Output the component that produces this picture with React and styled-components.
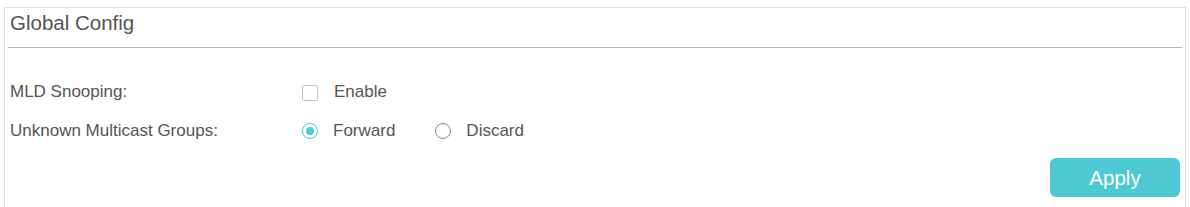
import React, { useState } from "react";
import styled, { createGlobalStyle } from "styled-components";

const Global = createGlobalStyle`
  html, body { margin: 0; padding: 0; background: #ffffff; overflow: hidden; }
  body { font-family: "Liberation Sans", Arial, sans-serif; }
  * { box-sizing: border-box; }
`;

const Panel = styled.section`
  margin: 7px 4px 0 4px;
  width: 1182px;
  height: 201px;
  border: 1px solid #e2e2e2;
  padding: 0 5px;
  background: #fff;
`;

const Header = styled.div`
  margin: 0 -2px 0 -2px;
  padding: 3px 2px 12px 2px;
  border-bottom: 1px solid #b4b4b4;
`;

const Title = styled.h2`
  margin: 0;
  font-size: 20.5px;
  line-height: 24px;
  font-weight: normal;
  color: #555;
`;

const Body = styled.div`
  padding-top: 24px;
`;

const Row = styled.div`
  display: flex;
  align-items: center;
  height: 39px;
`;

const Label = styled.div`
  width: 292px;
  font-size: 17px;
  color: #555;
`;

const Controls = styled.div`
  display: flex;
  align-items: center;
`;

const Option = styled.label`
  display: flex;
  align-items: center;
  margin-right: ${(p) => p.$gap || 0}px;
  font-size: 17px;
  color: #555;
  cursor: pointer;
`;

const Box = styled.span`
  width: 16px;
  height: 16px;
  border: 1px solid #c4c4c4;
  border-radius: 2px;
  margin-right: 16px;
  margin-top: ${(p) => p.$dy || 0}px;
  background: #fff;
`;

const Radio = styled.span`
  width: 16px;
  height: 16px;
  border-radius: 50%;
  border: 1.5px solid ${(p) => (p.$on ? "#4ccbd5" : "#8a8a8a")};
  margin-right: 15px;
  display: flex;
  align-items: center;
  justify-content: center;
  &::after {
    content: "";
    width: 8px;
    height: 8px;
    border-radius: 50%;
    background: ${(p) => (p.$on ? "#4ccbd5" : "transparent")};
  }
`;

const Footer = styled.div`
  display: flex;
  justify-content: flex-end;
  margin-top: 8px;
`;

const ApplyButton = styled.button`
  width: 130px;
  height: 39px;
  border: none;
  border-radius: 6px;
  background: #4ec9d4;
  color: #fff;
  font-family: "Liberation Sans", Arial, sans-serif;
  font-size: 20.5px;
  cursor: pointer;
`;

export default function App() {
  const [mode, setMode] = useState("forward");
  return (
    <>
      <Global />
      <Panel>
        <Header>
          <Title>Global Config</Title>
        </Header>
        <Body>
          <Row>
            <Label>MLD Snooping:</Label>
            <Controls>
              <Option>
                <Box $dy={3} />
                Enable
              </Option>
            </Controls>
          </Row>
          <Row>
            <Label>Unknown Multicast Groups:</Label>
            <Controls>
              <Option $gap={40} onClick={() => setMode("forward")}>
                <Radio $on={mode === "forward"} />
                Forward
              </Option>
              <Option onClick={() => setMode("discard")}>
                <Radio $on={mode === "discard"} />
                Discard
              </Option>
            </Controls>
          </Row>
        </Body>
        <Footer>
          <ApplyButton>Apply</ApplyButton>
        </Footer>
      </Panel>
    </>
  );
}
